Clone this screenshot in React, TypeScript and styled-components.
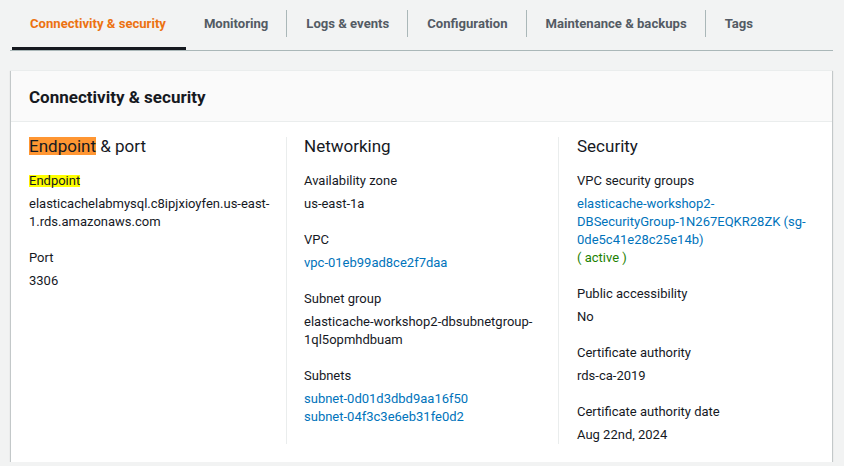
import styled, { createGlobalStyle } from 'styled-components';

const GlobalStyle = createGlobalStyle`
  html, body {
    margin: 0;
    padding: 0;
    background: #f2f3f3;
    font-family: Roboto, "Liberation Sans", Arial, sans-serif;
    color: #16191f;
  }
  * {
    box-sizing: border-box;
  }
`;

const Page = styled.div`
  padding: 0 11px 0 10px;
`;

const TabBar = styled.div`
  display: flex;
  height: 51px;
  padding-left: 2px;
  border-bottom: 1px solid #aab7b8;
`;

const Tab = styled.div<{ $active?: boolean }>`
  position: relative;
  height: 50px;
  padding: 10px 0 13px;
  font-size: 13.1px;
  font-weight: 700;
  color: ${(p) => (p.$active ? '#ec7211' : '#545b64')};
  cursor: pointer;

  &::after {
    content: '';
    display: ${(p) => (p.$active ? 'block' : 'none')};
    position: absolute;
    left: 0;
    right: 0;
    bottom: 0;
    height: 3px;
    background: #16191f;
  }

  &:first-child > span {
    padding-right: 20px;
  }

  & + & > span {
    border-left: 1px solid #aab7b8;
    padding-left: 19px;
  }
`;

const TabLabel = styled.span`
  display: block;
  line-height: 27px;
  padding: 0 18px 0 18px;
  white-space: nowrap;
`;

const Card = styled.section`
  margin: 19px 1px 0;
  background: #fff;
  border-top: 1px solid #eaeded;
  box-shadow: 0 1px 1px 0 rgba(0, 28, 36, 0.3), 1px 1px 1px 0 rgba(0, 28, 36, 0.15),
    -1px 1px 1px 0 rgba(0, 28, 36, 0.15);
`;

const CardHeader = styled.header`
  background: #fafafa;
  border-bottom: 1px solid #eaeded;
  padding: 15px 18px 13px;
`;

const CardTitle = styled.h2`
  margin: 0;
  font-size: 17px;
  line-height: 22px;
  font-weight: 700;
`;

const CardBody = styled.div`
  display: grid;
  grid-template-columns: 257px 272px 1fr;
  padding: 15px 18px 18px;
`;

const Column = styled.div`
  display: flex;
  flex-direction: column;
  gap: 18px;
  padding: 0 10px 0 0;

  & + & {
    border-left: 1px solid #eaeded;
    padding-left: 17px;
  }
  &:last-child {
    padding-left: 18px;
    padding-right: 0;
  }
`;

const ColumnTitle = styled.h3`
  margin: 0 0 -1px;
  font-size: 17px;
  line-height: 18px;
  font-weight: 400;
`;

const Field = styled.div`
  display: flex;
  flex-direction: column;
  gap: 5px;
  font-size: 13px;
  line-height: 18px;
`;

const Label = styled.div``;

const Value = styled.div<{ $tone?: 'link' | 'ok' }>`
  color: ${(p) => (p.$tone === 'link' ? '#0073bb' : p.$tone === 'ok' ? '#1d8102' : '#16191f')};
`;

const Mark = styled.mark<{ $color: string; $lh: number }>`
  display: inline-block;
  background: ${(p) => p.$color};
  color: inherit;
  line-height: ${(p) => p.$lh}px;
  padding: 0;
`;

const tabs = [
  'Connectivity & security',
  'Monitoring',
  'Logs & events',
  'Configuration',
  'Maintenance & backups',
  'Tags',
];

export default function App() {
  return (
    <Page>
      <GlobalStyle />
      <TabBar>
        {tabs.map((t, i) => (
          <Tab key={t} $active={i === 0}>
            <TabLabel>{t}</TabLabel>
          </Tab>
        ))}
      </TabBar>

      <Card>
        <CardHeader>
          <CardTitle>Connectivity &amp; security</CardTitle>
        </CardHeader>
        <CardBody>
          <Column>
            <ColumnTitle>
              <Mark $color="#ff9632" $lh={18}>Endpoint</Mark> &amp; port
            </ColumnTitle>
            <Field>
              <Label>
                <Mark $color="#ffff00" $lh={12}>Endpoint</Mark>
              </Label>
              <Value>elasticachelabmysql.c8ipjxioyfen.us-east-1.rds.amazonaws.com</Value>
            </Field>
            <Field>
              <Label>Port</Label>
              <Value>3306</Value>
            </Field>
          </Column>

          <Column>
            <ColumnTitle>Networking</ColumnTitle>
            <Field>
              <Label>Availability zone</Label>
              <Value>us-east-1a</Value>
            </Field>
            <Field>
              <Label>VPC</Label>
              <Value $tone="link">vpc-01eb99ad8ce2f7daa</Value>
            </Field>
            <Field>
              <Label>Subnet group</Label>
              <Value>elasticache-workshop2-dbsubnetgroup-1ql5opmhdbuam</Value>
            </Field>
            <Field>
              <Label>Subnets</Label>
              <Value $tone="link">
                subnet-0d01d3dbd9aa16f50
                <br />
                subnet-04f3c3e6eb31fe0d2
              </Value>
            </Field>
          </Column>

          <Column>
            <ColumnTitle>Security</ColumnTitle>
            <Field>
              <Label>VPC security groups</Label>
              <div>
                <Value $tone="link">
                  elasticache-workshop2-DBSecurityGroup-1N267EQKR28ZK (sg-0de5c41e28c25e14b)
                </Value>
                <Value $tone="ok">( active )</Value>
              </div>
            </Field>
            <Field>
              <Label>Public accessibility</Label>
              <Value>No</Value>
            </Field>
            <Field>
              <Label>Certificate authority</Label>
              <Value>rds-ca-2019</Value>
            </Field>
            <Field>
              <Label>Certificate authority date</Label>
              <Value>Aug 22nd, 2024</Value>
            </Field>
          </Column>
        </CardBody>
      </Card>
    </Page>
  );
}
